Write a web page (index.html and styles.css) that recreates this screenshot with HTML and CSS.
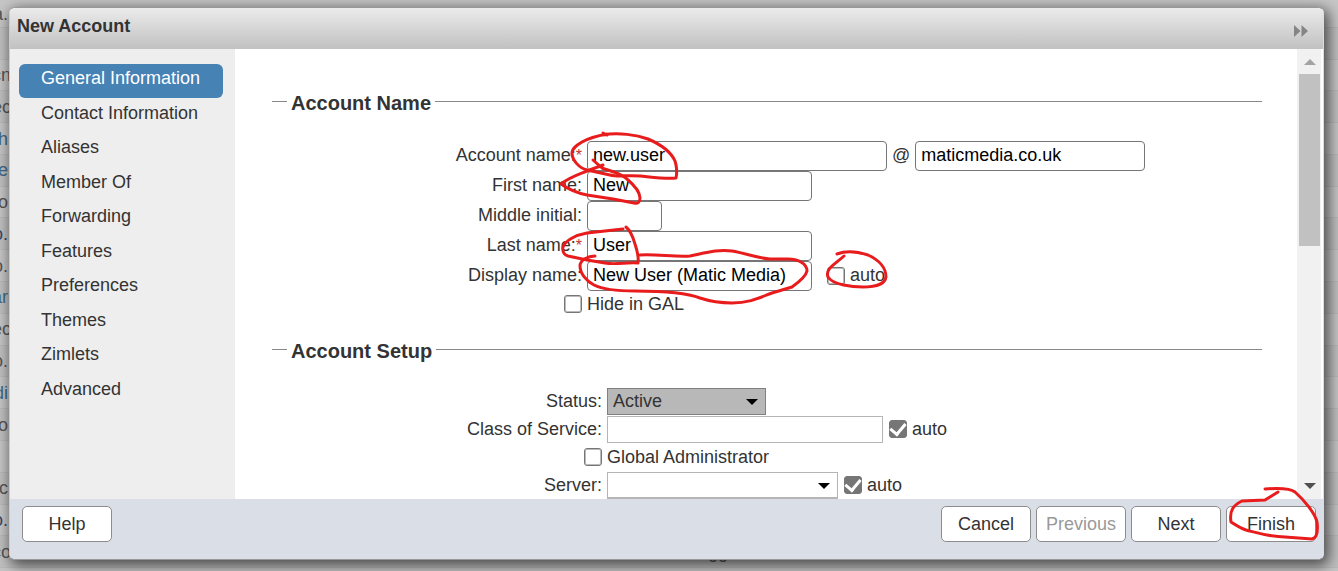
FILE: index.html
```html
<!DOCTYPE html>
<html lang="en">
<head>
<meta charset="utf-8">
<title>New Account</title>
<link rel="stylesheet" href="styles.css">
</head>
<body>
<div class="backdrop" aria-hidden="true">
  <div class="row first"><span class="edge">a.</span><span class="cell name">sal</span><span class="cell status">Complaints (Matic Media)</span><span class="cell type">closed at</span><span class="cell date">27 March 2023 3:10:03 PM</span></div>
  <div class="row"></div>
  <div class="row"><span class="edge cut">cn</span></div>
  <div class="row"><span class="edge cut">ec</span></div>
  <div class="row"><span class="edge blue">h</span></div>
  <div class="row"><span class="edge blue">ne</span></div>
  <div class="row"><span class="edge">o</span></div>
  <div class="row"><span class="edge navy">o.</span></div>
  <div class="row"><span class="edge">o.</span></div>
  <div class="row"><span class="edge blue">ar</span></div>
  <div class="row"><span class="edge cut">ec</span></div>
  <div class="row"><span class="edge">o.</span></div>
  <div class="row"><span class="edge blue">di</span></div>
  <div class="row"><span class="edge">o</span></div>
  <div class="row"></div>
  <div class="row"><span class="edge">c</span></div>
  <div class="row"><span class="edge navy">o.</span></div>
  <div class="row"><span class="edge cut">co</span><span class="cell foot">gg</span></div>
</div>

<main class="dialog" role="dialog" aria-labelledby="title">
  <header class="titlebar">
    <h1 id="title">New Account</h1>
    <button class="expand" type="button" aria-label="Expand">
      <svg width="16" height="14" viewBox="0 0 16 14"><path d="M1 1L7.500 7L1 13zM8.500 1L15 7L8.500 13z" fill="#858585"/></svg>
    </button>
  </header>

  <div class="body">
    <nav class="sidebar">
      <ul>
        <li><a class="active" href="#general">General Information</a></li>
        <li><a href="#contact">Contact Information</a></li>
        <li><a href="#aliases">Aliases</a></li>
        <li><a href="#member">Member Of</a></li>
        <li><a href="#forwarding">Forwarding</a></li>
        <li><a href="#features">Features</a></li>
        <li><a href="#preferences">Preferences</a></li>
        <li><a href="#themes">Themes</a></li>
        <li><a href="#zimlets">Zimlets</a></li>
        <li><a href="#advanced">Advanced</a></li>
      </ul>
    </nav>

    <form class="content">
      <section class="group names">
        <h2>Account Name</h2>
        <div class="field"><label for="account">Account name:<span class="req">*</span></label><div class="controls"><input class="text wide" id="account" type="text" value="new.user"><label for="domain">@</label><input class="text domain" id="domain" type="text" value="maticmedia.co.uk"></div></div>
        <div class="field"><label for="first">First name:</label><div class="controls"><input class="text" id="first" type="text" value="New"></div></div>
        <div class="field"><label for="middle">Middle initial:</label><div class="controls"><input class="text short" id="middle" type="text"></div></div>
        <div class="field"><label for="last">Last name:<span class="req">*</span></label><div class="controls"><input class="text" id="last" type="text" value="User"></div></div>
        <div class="field"><label for="display">Display name:</label><div class="controls"><input class="text" id="display" type="text" value="New User (Matic Media)"><input class="check spaced" id="display-auto" type="checkbox"><label for="display-auto">auto</label></div></div>
        <div class="field tick"><input class="check" id="gal" type="checkbox"><label for="gal">Hide in GAL</label></div>
      </section>

      <section class="group setup">
        <h2>Account Setup</h2>
        <div class="field"><label for="status">Status:</label><div class="controls"><span class="picker status-picker"><select id="status"><option>Active</option></select><svg width="12" height="8" viewBox="0 0 12 8"><path d="M0 1H12L6 7z"/></svg></span></div></div>
        <div class="field"><label for="cos">Class of Service:</label><div class="controls"><input class="cos" id="cos" type="text"><input class="check" id="cos-auto" type="checkbox" checked><label for="cos-auto">auto</label></div></div>
        <div class="field tick"><input class="check" id="admin" type="checkbox"><label for="admin">Global Administrator</label></div>
        <div class="field"><label for="server">Server:</label><div class="controls"><span class="picker server-picker"><select id="server"><option></option></select><svg width="12" height="8" viewBox="0 0 12 8"><path d="M0 1H12L6 7z"/></svg></span><input class="check" id="server-auto" type="checkbox" checked><label for="server-auto">auto</label></div></div>
      </section>
    </form>

    <div class="scrollbar" aria-hidden="true">
      <svg width="12" height="6" viewBox="0 0 12 6"><path d="M0 6L6 0L12 6z" fill="#a3a3a3"/></svg>
      <div class="track"><div class="thumb"></div></div>
      <svg width="12" height="6" viewBox="0 0 12 6"><path d="M0 0H12L6 6z" fill="#505050"/></svg>
    </div>
  </div>

  <footer class="actions">
    <button class="btn help" type="button">Help</button>
    <button class="btn" type="button">Cancel</button>
    <button class="btn" type="button" disabled>Previous</button>
    <button class="btn" type="button">Next</button>
    <button class="btn" type="button">Finish</button>
  </footer>
</main>

<svg class="marks" width="1338" height="571" viewBox="0 0 1338 571" aria-hidden="true">
  <path d="M603 133L607 135M603 135C618 132 637 135 648 139C662 145 671 152 675 161C677 167 677 173 676 178C665 179 651 177 640 176C628 175 618 177 610 175L587 170C579 168 572 160 572 153C572 148 577 145 582 142C589 138 596 136 607 134"/>
  <path d="M593 160L602 168C610 171 621 173 627 179C634 185 640 191 640 198C640 202 638 204 634 203L613 199L587 195C577 193 568 189 561 184C568 178 577 175 587 171L603 165"/>
  <path d="M623 229L587 233C575 235 565 241 563 247C562 251 564 255 568 256L587 260L605 263C616 265 627 262 638 263C639 257 637 250 635 244C633 237 631 231 626 227"/>
  <path d="M595 256C588 256 580 260 580 266C580 273 586 281 594 285C604 290 619 291 635 291C656 291 685 292 700 298C709 301 721 303 732 303C749 303 759 298 772 293L792 287C799 282 806 276 807 271C807 263 797 259 788 259H770C757 258 745 253 732 251C718 249 705 253 690 256C675 257 656 254 640 255"/>
  <path d="M837 254C847 250 859 252 868 255C879 260 886 268 886 277C885 284 875 287 863 287C853 287 833 285 828 277C825 269 834 265 844 256"/>
  <path d="M1265 489C1278 488 1290 488 1295 492C1304 500 1315 513 1317 522C1318 530 1317 538 1312 539L1285 537C1270 537 1258 533 1246 530C1240 528 1234 524 1231 522C1229 510 1234 505 1242 501L1265 500L1278 492"/>
</svg>
</body>
</html>
```
FILE: styles.css
```css
* { box-sizing: border-box; }

body {
  margin: 0;
  height: 100vh;
  padding: 7px 14px 11px 9px;
  display: flex;
  overflow: hidden;
  background: #c6c6c6;
  color: #333;
  font: 18px/20px "Liberation Sans", Arial, sans-serif;
}

h1, h2, ul { margin: 0; padding: 0; }
button, input, select { font: inherit; color: inherit; margin: 0; }

.backdrop {
  position: absolute;
  inset: -4px 0 3px;
  display: flex;
  flex-direction: column;
  color: #555;
}
.row {
  flex: 1;
  display: grid;
  grid-template-columns: 8px 18px 109px 312px 196px 1fr;
  align-items: center;
  border-bottom: 1px solid #b9b9b9;
  white-space: nowrap;
}
.row:nth-child(even) { background: #c0c0c0; }
.first .edge, .first .cell { padding-top: 5px; }
.edge { grid-column: 1; display: flex; justify-content: flex-end; }
.edge.cut { margin-right: -3px; }
.edge.blue { color: #416a8c; }
.edge.navy { color: #34476b; }
.name { grid-column: 3; }
.status { grid-column: 4; }
.type { grid-column: 5; }
.date { grid-column: 6; }
.foot { grid-column: 6; margin-left: 65px; }

.dialog {
  position: relative;
  flex: 1;
  display: flex;
  flex-direction: column;
  overflow: hidden;
  background: #fff;
  border: 1px solid #999;
  border-color: #999 #ddd #999 #ccc;
  border-radius: 6px;
  box-shadow: 3px 4px 14px 2px rgba(0, 0, 0, .6);
}

.titlebar {
  height: 41px;
  padding: 0 14px 5px 7px;
  display: flex;
  justify-content: space-between;
  align-items: center;
  background: linear-gradient(#ebebeb, #c1c1c1);
}
.titlebar h1 { font-size: 18px; line-height: 20px; }
.expand {
  border: 0;
  padding: 9px 0 0;
  background: none;
  line-height: 0;
}

.body { flex: 1; min-height: 0; display: flex; }

.sidebar { width: 225px; padding: 15px 12px 0 9px; background: #eee; }
.sidebar ul {
  height: 345px;
  display: grid;
  grid-template-rows: repeat(10, 1fr);
  list-style: none;
}
.sidebar a {
  display: block;
  height: 34px;
  padding: 4px 22px;
  border-radius: 6px;
  color: #333;
  text-decoration: none;
}
.sidebar .active { background: #4682b4; color: #fff; }

.content { flex: 1; overflow: hidden; padding: 42px 35px 0 37px; }
.group h2 {
  display: flex;
  align-items: center;
  gap: 4px;
  height: 24px;
  font-size: 20px;
  line-height: 24px;
}
.group h2::before, .group h2::after {
  content: "";
  height: 1px;
  background: #888;
  margin-bottom: 4px;
}
.group h2::before { width: 15px; }
.group h2::after { flex: 1; }

.field {
  display: grid;
  grid-template-columns: 310px 1fr;
  column-gap: 5px;
  align-items: center;
  height: 30px;
  white-space: nowrap;
}
.field > label:first-child { text-align: right; }
.names label { padding-bottom: 2px; }
.names h2 { margin-bottom: 26px; }
.names .tick { height: 26px; }
.setup { padding-top: 22px; }
.setup h2 { margin-bottom: 24px; }
.setup .field { grid-template-columns: 330px 1fr; height: 28px; }
.tick .check { justify-self: end; }
.names .tick label { padding: 0; }
.req { color: #c4342b; font-size: 16px; }
.controls { display: flex; align-items: center; gap: 5px; }

.text, .cos {
  width: 225px;
  height: 30px;
  padding: 0 5px 2px;
  border: 1px solid #767676;
  border-radius: 4px;
  background: #fff;
  color: #000;
}
.wide { width: 300px; }
.short { width: 75px; }
.domain { width: 230px; }
.cos { width: 276px; height: 27px; border-color: #b5b5b5; border-radius: 0; }

.check {
  appearance: none;
  width: 18px;
  height: 18px;
  border: 1px solid #767676;
  border-radius: 3px;
  background: #fff;
  box-shadow: inset 0 0 0 1px #bbb;
  display: grid;
  place-items: center;
}
.check:checked { background: #767676; box-shadow: none; }
.check:checked::before {
  content: "";
  width: 7px;
  height: 12px;
  border: solid #fff;
  border-width: 0 3px 3px 0;
  transform: translateY(-2px) rotate(40deg);
}
.spaced { margin-left: 10px; }
.setup .controls .check { margin-left: 1px; }

.picker { position: relative; height: 27px; }
.picker select {
  appearance: none;
  width: 100%;
  height: 27px;
  padding: 0 5px;
  border: 1px solid #b5b5b5;
  border-bottom-width: 2px;
  border-radius: 0;
  background: #fff;
}
.picker svg { position: absolute; right: 8px; top: 10px; pointer-events: none; }
.status-picker { width: 159px; }
.status-picker select { background: #b8b8b8; border: 1px solid #808080; }
.server-picker { width: 231px; }

.scrollbar {
  width: 24px;
  margin-right: 2px;
  padding: 10px 1px 10px 2px;
  display: flex;
  flex-direction: column;
  align-items: center;
  gap: 9px;
  background: #f1f1f1;
}
.track { flex: 1; width: 100%; }
.thumb { height: 43%; background: #c1c1c1; }

.actions {
  height: 60px;
  padding: 7px 7px 0 12px;
  display: flex;
  gap: 5px;
  background: #dadee6;
}
.btn {
  width: 90px;
  height: 36px;
  padding: 0;
  border: 1px solid #8c8c8c;
  border-radius: 5px;
  background: #fff;
}
.btn:disabled { color: #999; }
.help { margin-right: auto; }

.marks {
  position: absolute;
  left: 0;
  top: 0;
  fill: none;
  stroke: #e81c1c;
  stroke-width: 3;
  stroke-linecap: round;
  stroke-linejoin: round;
  pointer-events: none;
}
```
